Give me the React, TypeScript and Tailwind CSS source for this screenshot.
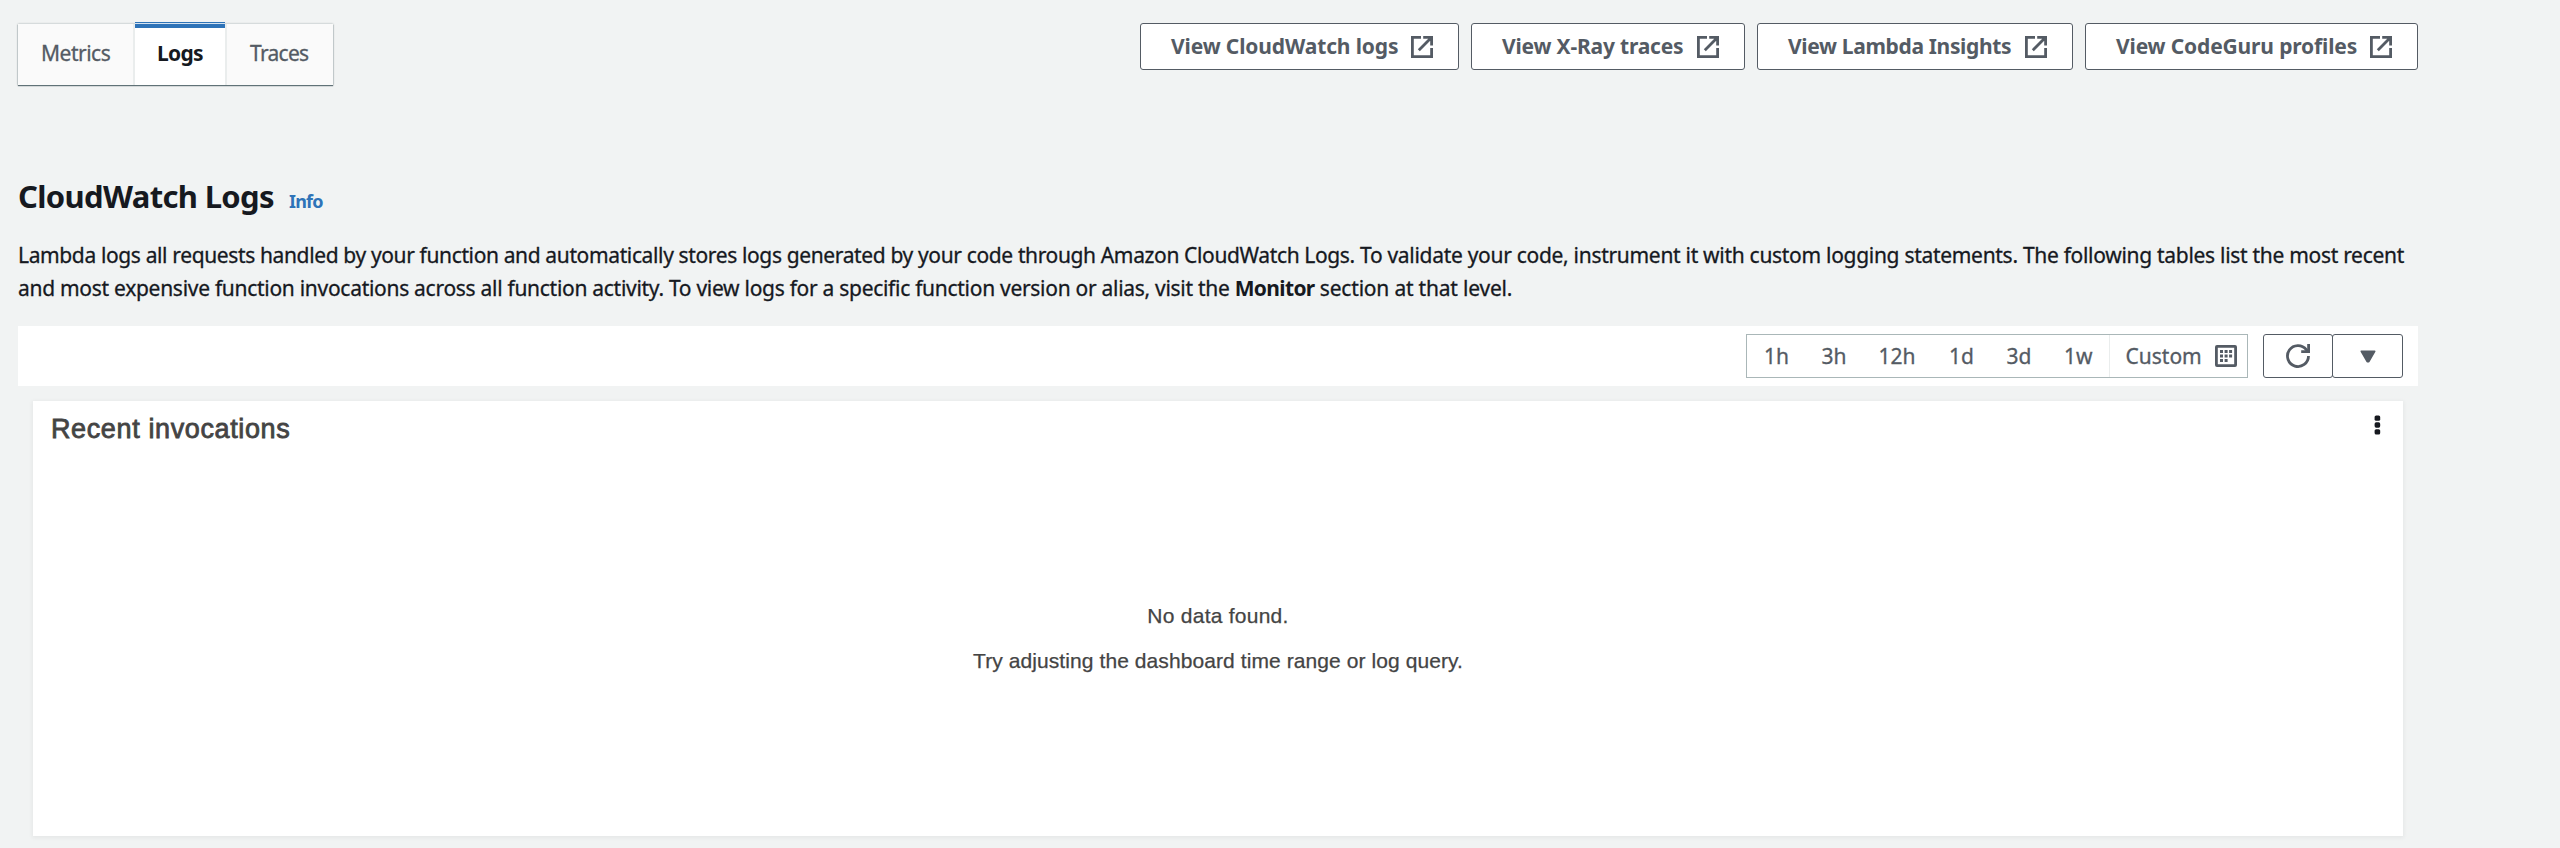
import React from "react";

const links = [
  { label: "View CloudWatch logs", box: "w-[319px] pl-[30px] mr-[12px]", text: "w-[227px] tracking-[-0.13px]" },
  { label: "View X-Ray traces", box: "w-[274px] pl-[30px] mr-[12px]", text: "w-[182px] tracking-[-0.19px]" },
  { label: "View Lambda Insights", box: "w-[316px] pl-[30px] mr-[12px]", text: "w-[224px] tracking-[-0.34px]" },
  { label: "View CodeGuru profiles", box: "w-[333px] pl-[30px]", text: "w-[241px] tracking-[-0.15px]" },
];

const ranges = [
  { label: "1h", box: "w-[57.5px]" },
  { label: "3h", box: "w-[57px]" },
  { label: "12h", box: "w-[70.5px]" },
  { label: "1d", box: "w-[57.5px]" },
  { label: "3d", box: "w-[57.5px]" },
  { label: "1w", box: "w-[44.5px]" },
];

function ExternalIcon() {
  return (
    <svg className="ml-[13px] h-[22px] w-[22px] shrink-0" viewBox="0 0 22 22" fill="none" stroke="currentColor" strokeWidth="2.8">
      <path d="M10 1.4H1.4V20.6H20.6V12" />
      <path d="M12.2 1.4H20.6V9.4M20.2 1.8L7.8 14.2" />
    </svg>
  );
}

function CalendarIcon() {
  return (
    <svg className="ml-[15px] h-[22px] w-[22px] shrink-0" viewBox="0 0 22 22" fill="currentColor">
      <rect x="1.4" y="1.4" width="19.2" height="19.2" rx="0.6" fill="none" stroke="currentColor" strokeWidth="2.8" />
      <path d="M5 5h3v3H5zM9.6 5h3v3h-3zM14.1 5h3v3h-3zM5 9.5h3v3H5zM9.6 9.5h3v3h-3zM14.1 9.5h3v3h-3zM5 14h3v3H5zM9.6 14h3v3h-3z" />
    </svg>
  );
}

function RefreshIcon() {
  return (
    <svg className="h-6 w-6" viewBox="0 0 24 24" fill="none" stroke="currentColor" strokeWidth="2.8">
      <path d="M22.5 12A10.5 10.5 0 1 1 20.3 5.6L22 7.6" />
      <path d="M22.6 0V7.6H15.2" />
    </svg>
  );
}

export default function App() {
  return (
    <div className="h-[848px] w-[2560px] overflow-hidden bg-[#f1f3f3] pl-[18px] font-['Noto_Sans',sans-serif] text-[21px] text-[#16191f]">
      <div className="flex h-[176px] w-[2400px] items-start justify-between">
        <div className="mt-6 flex h-[61px] bg-[#fafafa] leading-[58px] text-[#545b64] shadow-[0_1px_1px_0_rgba(0,28,36,0.55),0_0_2px_0_rgba(0,28,36,0.35)]">
          <div className="w-[117px] border-r-2 border-[#eaeded] pl-[23px] tracking-[-0.5px] [-webkit-text-stroke:0.3px]">Metrics</div>
          <div className="relative w-[90px] bg-white pl-[22px] font-bold tracking-[-0.7px] text-[#16191f]">
            <div className="absolute -top-0.5 left-0 h-[6px] w-full bg-[#2e73b8] pt-px">
              <div className="h-px bg-[#d5e3f1]" />
            </div>
            Logs
          </div>
          <div className="w-[108px] border-l-2 border-[#eaeded] pl-[23px] tracking-[-0.7px] [-webkit-text-stroke:0.3px]">Traces</div>
        </div>
        <div className="mt-[23px] flex font-bold text-[#545b64]">
          {links.map((l) => (
            <button
              key={l.label}
              className={`flex h-[47px] items-center whitespace-nowrap rounded-[3px] border border-[#545b64] bg-white text-left leading-[44px] ${l.box}`}
            >
              <span className={`-mt-px ${l.text}`}>{l.label}</span>
              <ExternalIcon />
            </button>
          ))}
        </div>
      </div>

      <div className="flex h-10 items-baseline leading-10">
        <h2 className="w-[271px] whitespace-nowrap text-[31px] font-bold tracking-[-0.65px]">CloudWatch Logs</h2>
        <a className="text-[18px] font-bold tracking-[-0.8px] text-[#2e73b8]">Info</a>
      </div>

      <div className="mt-[23px] whitespace-nowrap leading-[33px] [-webkit-text-stroke:0.3px]">
        <p className="tracking-[-0.295px]">
          <span className="tracking-[-0.366px]">
            Lambda logs all requests handled by your function and automatically stores logs generated by your code
            through Amazon CloudWatch Logs.
          </span>{" "}
          To validate your code, instrument it with custom logging statements. The following tables list the most recent
        </p>
        <p className="tracking-[-0.285px]">
          and most expensive function invocations across all function activity. To view logs for a specific function
          version or alias, visit the <b className="tracking-[-0.65px] [-webkit-text-stroke:0]">Monitor</b>
          <span className="tracking-[-0.2px]"> section at that level.</span>
        </p>
      </div>

      <div className="mt-[21px] flex h-[60px] w-[2400px] items-center justify-end bg-white pr-[15px] leading-[42px] text-[#545b64]">
        <div className="flex h-11 w-[502px] border border-[#aab7b8] pl-[17px] [-webkit-text-stroke:0.3px]">
          {ranges.map((r) => (
            <span key={r.label} className={r.box}>{r.label}</span>
          ))}
          <div className="flex items-center border-l border-[#eaeded] pl-4">
            <span className="w-[74px]">Custom</span>
            <CalendarIcon />
          </div>
        </div>
        <button className="ml-[15px] flex h-11 w-[70px] items-center justify-center rounded-[3px] border border-[#545b64]">
          <RefreshIcon />
        </button>
        <button className="-ml-px flex h-11 w-[71px] items-center justify-center rounded-[3px] border border-[#545b64]">
          <svg className="h-[13px] w-4" viewBox="0 0 16 13" fill="currentColor" stroke="currentColor" strokeWidth="1.6" strokeLinejoin="round">
            <path d="M1.3 1.3H14.7L8.8 11.6H7.2Z" />
          </svg>
        </button>
      </div>

      <section className="ml-[15px] mt-[15px] flex h-[435px] w-[2370px] flex-col bg-white font-['Liberation_Sans',sans-serif] text-[#444444] shadow-[0_1px_4px_1px_rgba(0,0,0,0.05)]">
        <div className="flex items-start justify-between pl-[18px] pr-[22px]">
          <h3 className="mt-2 text-[27px] leading-10 tracking-[0.62px] [-webkit-text-stroke:0.8px]">Recent invocations</h3>
          <svg className="mt-[14px] h-5 w-[7px] text-[#16191f]" viewBox="0 0 7 20" fill="currentColor">
            <rect x="0.6" y="0.4" width="5.6" height="5.4" rx="1.6" />
            <rect x="0.6" y="7.3" width="5.6" height="5.4" rx="1.6" />
            <rect x="0.6" y="14.2" width="5.6" height="5.4" rx="1.6" />
          </svg>
        </div>
        <div className="mt-36 text-center leading-[45px] [-webkit-text-stroke:0.25px]">
          <p className="tracking-[0.25px]">No data found.</p>
          <p className="tracking-[0.083px]">Try adjusting the dashboard time range or log query.</p>
        </div>
      </section>
    </div>
  );
}
